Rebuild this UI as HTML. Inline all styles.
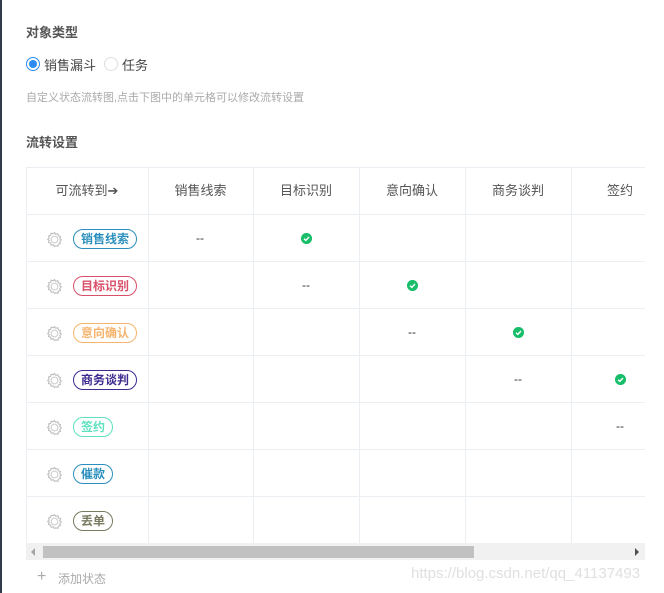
<!DOCTYPE html>
<html><head><meta charset="utf-8"><style>
*{margin:0;padding:0;box-sizing:border-box}
body{width:664px;height:593px;background:#fff;font-family:"Liberation Sans","Noto Sans CJK SC",sans-serif;position:relative;overflow:hidden;color:#333}
.lb{position:absolute;left:0;top:0;width:2px;height:593px;background:#2f3a4a}
.a{position:absolute;white-space:nowrap}
.h{font-size:13px;font-weight:bold;color:#555}
.vl{position:absolute;width:1px;background:#ebeef3;top:167px;height:376px}
.hl{position:absolute;height:1px;background:#ebeef3;left:26px;width:619px}
.th{position:absolute;top:167px;height:47px;line-height:47px;text-align:center;font-size:13px;color:#555}
.tag{position:absolute;left:73px;height:20px;line-height:18px;border:1px solid;border-radius:10px;font-size:12px;font-weight:bold;padding:0 7px}
.gear{position:absolute;left:46px}
.dash{position:absolute;font-size:12px;color:#333}
.ck{position:absolute;width:11px;height:11px;border-radius:50%;background:#19be6b}
</style></head><body>
<div class="lb"></div>
<div class="a h" style="left:26px;top:22px">对象类型</div>
<div class="a" style="left:26px;top:57px;width:14px;height:14px;border-radius:50%;border:1px solid #2d8cf0"><div style="position:absolute;left:2px;top:2px;width:8px;height:8px;border-radius:50%;background:#2d8cf0"></div></div>
<div class="a" style="left:44px;top:55px;font-size:13px;color:#444">销售漏斗</div>
<div class="a" style="left:104px;top:57px;width:14px;height:14px;border-radius:50%;border:1px solid #dcdee2"></div>
<div class="a" style="left:122px;top:55px;font-size:13px;color:#444">任务</div>
<div class="a" style="left:26px;top:89px;font-size:11px;color:#aaa">自定义状态流转图,点击下图中的单元格可以修改流转设置</div>
<div class="a h" style="left:26px;top:132px">流转设置</div>

<div class="hl" style="top:167px"></div>
<div class="hl" style="top:214px"></div>
<div class="hl" style="top:261px"></div>
<div class="hl" style="top:308px"></div>
<div class="hl" style="top:355px"></div>
<div class="hl" style="top:402px"></div>
<div class="hl" style="top:449px"></div>
<div class="hl" style="top:496px"></div>
<div class="vl" style="left:26px"></div>
<div class="vl" style="left:148px"></div>
<div class="vl" style="left:253px"></div>
<div class="vl" style="left:359px"></div>
<div class="vl" style="left:465px"></div>
<div class="vl" style="left:571px"></div>

<div class="th" style="left:26px;width:122px">可流转到➔</div>
<div class="th" style="left:148px;width:105px">销售线索</div>
<div class="th" style="left:253px;width:106px">目标识别</div>
<div class="th" style="left:359px;width:106px">意向确认</div>
<div class="th" style="left:465px;width:106px">商务谈判</div>
<div class="th" style="left:571px;width:98px">签约</div>

<svg width="0" height="0" style="position:absolute"><defs><symbol id="g" viewBox="0 0 16 16"><path d="M8 1.5l1.2 1.6 2-.5.4 2 2 .6-.6 1.9 1.4 1.4-1.4 1.4.6 1.9-2 .6-.4 2-2-.5L8 14.5l-1.2-1.6-2 .5-.4-2-2-.6.6-1.9L1.6 8 3 6.6l-.6-1.9 2-.6.4-2 2 .5z" fill="none" stroke="#bbb" stroke-width="1"/><circle cx="8" cy="8" r="3.2" fill="none" stroke="#ccc" stroke-width="1"/></symbol></defs></svg>

<svg class="gear" style="top:231px" width="17" height="17"><use href="#g"/></svg>
<svg class="gear" style="top:278px" width="17" height="17"><use href="#g"/></svg>
<svg class="gear" style="top:325px" width="17" height="17"><use href="#g"/></svg>
<svg class="gear" style="top:372px" width="17" height="17"><use href="#g"/></svg>
<svg class="gear" style="top:419px" width="17" height="17"><use href="#g"/></svg>
<svg class="gear" style="top:466px" width="17" height="17"><use href="#g"/></svg>
<svg class="gear" style="top:513px" width="17" height="17"><use href="#g"/></svg>

<div class="tag" style="top:229px;color:#2a8fbd;border-color:#2a8fbd">销售线索</div>
<div class="tag" style="top:276px;color:#d9506a;border-color:#d9506a">目标识别</div>
<div class="tag" style="top:323px;color:#f5b36c;border-color:#f5b36c">意向确认</div>
<div class="tag" style="top:370px;color:#3f2a90;border-color:#3f2a90">商务谈判</div>
<div class="tag" style="top:417px;color:#5ee0c0;border-color:#5ee0c0">签约</div>
<div class="tag" style="top:464px;color:#2a8fbd;border-color:#2a8fbd">催款</div>
<div class="tag" style="top:511px;color:#7a7a60;border-color:#7a7a60">丢单</div>

<div class="dash" style="left:196px;top:231px">--</div>
<div class="dash" style="left:302px;top:278px">--</div>
<div class="dash" style="left:408px;top:325px">--</div>
<div class="dash" style="left:514px;top:372px">--</div>
<div class="dash" style="left:616px;top:419px">--</div>

<svg class="ck" style="left:301px;top:233px" viewBox="0 0 11 11"><circle cx="5.5" cy="5.5" r="5.5" fill="#19be6b"/><path d="M3 5.7l1.8 1.7L8 4" fill="none" stroke="#fff" stroke-width="1.4"/></svg>
<svg class="ck" style="left:407px;top:280px" viewBox="0 0 11 11"><circle cx="5.5" cy="5.5" r="5.5" fill="#19be6b"/><path d="M3 5.7l1.8 1.7L8 4" fill="none" stroke="#fff" stroke-width="1.4"/></svg>
<svg class="ck" style="left:513px;top:327px" viewBox="0 0 11 11"><circle cx="5.5" cy="5.5" r="5.5" fill="#19be6b"/><path d="M3 5.7l1.8 1.7L8 4" fill="none" stroke="#fff" stroke-width="1.4"/></svg>
<svg class="ck" style="left:615px;top:374px" viewBox="0 0 11 11"><circle cx="5.5" cy="5.5" r="5.5" fill="#19be6b"/><path d="M3 5.7l1.8 1.7L8 4" fill="none" stroke="#fff" stroke-width="1.4"/></svg>

<div class="a" style="left:26px;top:543px;width:619px;height:17px;background:#f1f1f1"></div>
<div class="a" style="left:43px;top:546px;width:431px;height:12px;background:#c1c1c1"></div>
<div class="a" style="left:31px;top:548px;width:0;height:0;border-top:4px solid transparent;border-bottom:4px solid transparent;border-right:4px solid #a3a3a3"></div>
<div class="a" style="left:635px;top:548px;width:0;height:0;border-top:4px solid transparent;border-bottom:4px solid transparent;border-left:4px solid #505050"></div>

<div class="a" style="left:37px;top:568px;font-size:16px;color:#aaa">+</div>
<div class="a" style="left:58px;top:570px;font-size:12px;color:#aaa">添加状态</div>
<div class="a" style="left:411px;top:565px;font-size:15px;color:#e0e0e0">https://blog.csdn.net/qq_41137493</div>
</body></html>
